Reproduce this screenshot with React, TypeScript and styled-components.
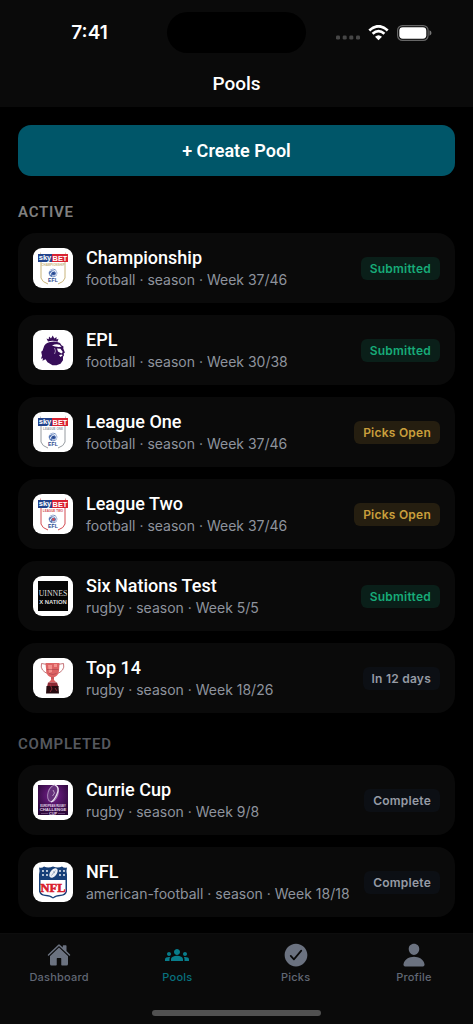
import React from "react";
import styled, { createGlobalStyle } from "styled-components";
import { IoCheckmarkCircle, IoHome, IoPerson } from "react-icons/io5";
import { MdGroups } from "react-icons/md";

const GlobalStyle = createGlobalStyle`
  *, *::before, *::after { box-sizing: border-box; }
  body {
    margin: 0;
    background: #000;
    color: #fff;
    font-family: Inter, "Liberation Sans", sans-serif;
  }
`;

const Screen = styled.div`
  display: flex;
  flex-direction: column;
  min-height: 100vh;
`;

const Header = styled.header`
  padding-top: 12px;
  background: #0a0a0a;
`;

const StatusBar = styled.div`
  display: grid;
  grid-template-columns: 1fr 139px 1fr;
  align-items: center;
`;

const Time = styled.time`
  padding-left: 12px;
  text-align: center;
  font-size: 19px;
  font-weight: 600;
  line-height: 24px;
`;

const Island = styled.div`
  height: 41px;
  border-radius: 21px;
  background: #000;
`;

const Indicators = styled.div`
  display: flex;
  justify-content: center;
  align-items: center;
  gap: 8px;
  padding-right: 12px;
`;

const PageTitle = styled.h1`
  margin: 0;
  padding: 19px 0 11px;
  text-align: center;
  font-family: Roboto, sans-serif;
  font-size: 19px;
  font-weight: 500;
  line-height: 24px;
`;

const Main = styled.main`
  flex: 1;
  padding: 18px 18px 15px;
`;

const CreateButton = styled.button`
  display: block;
  width: 100%;
  margin: 0 0 27px;
  padding: 14px;
  border: 0;
  border-radius: 13px;
  background: #005669;
  color: #fff;
  font-family: Roboto, sans-serif;
  font-size: 18px;
  font-weight: 600;
  line-height: 23px;
  cursor: pointer;
`;

const Section = styled.section`
  & + & { margin-top: 22px; }
`;

const SectionTitle = styled.h2<{ $muted?: boolean }>`
  margin: 0 0 12px;
  color: ${(p) => (p.$muted ? "#55585e" : "#808080")};
  font-family: Roboto, sans-serif;
  font-size: 15px;
  font-weight: 600;
  line-height: 18px;
  letter-spacing: 0.05em;
  text-transform: uppercase;
`;

const PoolList = styled.ul`
  display: flex;
  flex-direction: column;
  gap: 12px;
  margin: 0;
  padding: 0;
  list-style: none;
`;

const PoolCard = styled.a`
  display: flex;
  align-items: center;
  gap: 13px;
  min-height: 70px;
  padding: 12px 15px;
  border-radius: 18px;
  background: #0a0a0a;
  color: inherit;
  text-decoration: none;
`;

const LogoTile = styled.span`
  flex: none;
  display: flex;
  width: 40px;
  height: 40px;
  border-radius: 9px;
  background: #fff;
  overflow: hidden;
`;

const PoolText = styled.span`
  flex: 1;
  min-width: 0;
  display: flex;
  flex-direction: column;
  padding-top: 2px;
`;

const PoolName = styled.span`
  font-family: Roboto, sans-serif;
  font-size: 18px;
  font-weight: 500;
  line-height: 22px;
`;

const PoolMeta = styled.span`
  color: #8e939d;
  font-size: 14px;
  line-height: 22px;
  white-space: nowrap;
`;

type Tone = "submitted" | "open" | "neutral";

const tones: Record<Tone, { bg: string; fg: string }> = {
  submitted: { bg: "#0a1f19", fg: "#17ab78" },
  open: { bg: "#251e10", fg: "#c99f3c" },
  neutral: { bg: "#0c0f14", fg: "#969ba5" },
};

const Badge = styled.span<{ $tone: Tone }>`
  flex: none;
  padding: 4px 9px;
  border-radius: 6px;
  background: ${(p) => tones[p.$tone].bg};
  color: ${(p) => tones[p.$tone].fg};
  font-size: 12px;
  font-weight: 600;
  line-height: 15px;
  letter-spacing: 0.02em;
`;

const TabBar = styled.nav`
  position: sticky;
  bottom: 0;
  display: flex;
  flex-direction: column;
  align-items: center;
  padding: 9px 0 8px;
  border-top: 1px solid #0d0d0d;
  background: #0a0a0a;
`;

const Tabs = styled.div`
  display: flex;
  width: 100%;
`;

const Tab = styled.a<{ $active?: boolean }>`
  flex: 1;
  display: flex;
  flex-direction: column;
  align-items: center;
  gap: 2px;
  color: ${(p) => (p.$active ? "#087d8b" : "#6b7280")};
  text-decoration: none;
`;

const TabIcon = styled.span`
  display: flex;
  align-items: center;
  justify-content: center;
  height: 24px;

  svg { flex: none; }
`;

const TabLabel = styled.span`
  font-size: 11px;
  font-weight: 500;
  line-height: 16px;
  letter-spacing: 0.02em;
  opacity: 0.9;
`;

const HomeIndicator = styled.div`
  width: 169px;
  height: 6px;
  margin-top: 25px;
  border-radius: 3px;
  background: #505050;
`;

function EflLogo({ label, trim }: { label: string; trim: string }) {
  return (
    <svg width="40" height="40" viewBox="0 0 40 40" aria-hidden="true">
      <path d="M8 14V30Q9 34 15 36M32 14V30Q31 34 25 36" fill="none" stroke={trim} strokeWidth="1" />
      <path d="M7.500 4.500V7M32.500 4.500V7" stroke={trim} strokeWidth=".6" />
      <path d="M5 6h14v8H5z" fill="#23438b" />
      <path d="M19 6h16v8H19z" fill="#d92332" />
      <g fontFamily="Liberation Sans, sans-serif" fontWeight="700" textAnchor="middle">
        <text x="12" y="12" fontSize="7.600" fill="#fff">sky</text>
        <text x="27" y="12.700" fontSize="7.400" fill="#fff">BET</text>
        <text x="20" y="17.500" fontSize="3" fill={trim}>{label}</text>
        <text x="20" y="34.300" fontSize="5.200" fill="#29488f">EFL</text>
      </g>
      <circle cx="20" cy="25" r="4.300" fill="#5878b5" />
      <path d="M16 23q5-3 7 1t-4 4M17 27q1-5 7-4" fill="none" stroke="#fff" strokeWidth=".9" />
      <circle cx="20.500" cy="25.400" r="1.300" fill={trim === "#d34a50" ? trim : "#29488f"} />
    </svg>
  );
}

function LionLogo() {
  return (
    <svg width="40" height="40" viewBox="0 0 40 40" aria-hidden="true">
      <g fill="#360d58">
        <path d="M15 11.500l-1.500-3 2.200.8L16 6.500l2 2 1.700-3 1.600 3 2.200-1.500v2.500l2-.7-1 3q-4.500-1.800-9.500-.3z" />
        <path d="M11 16.500q1-3.500 6-4.500 6-1.500 10 1l1.500 2.300 2 1.300-.2 2 1.600 4-1.200 1 .3 2-1 1.200v3.500l-2.500 3.500-4 1.500h-4l-5-3-2-3-3 1.500.5-2.500-2 .5 1-3-.8-4 1.300-1z" />
      </g>
      <path d="M19 15.500q4-2 7.500-.8l2 2-3 .4-3.500-.7zM24 18.600l3.500.2 2.300 3.200-1.300 1.400-3.500-1.800zM26 25l3-.6.5 1.200-2 1.500z" fill="#fff" />
      <path d="M21.500 18l1 3-1 3" fill="none" stroke="#fff" strokeWidth=".5" />
    </svg>
  );
}

function SixNationsLogo() {
  return (
    <svg width="40" height="40" viewBox="0 0 40 40" aria-hidden="true">
      <path d="M5 5h30v30H5z" fill="#050505" />
      <g fill="#ddd" textAnchor="middle">
        <text x="20" y="20.300" fontFamily="Liberation Serif, serif" fontSize="7.800">UINNES</text>
        <text x="20" y="28" fontFamily="Liberation Sans, sans-serif" fontWeight="700" fontSize="5.900">X NATION</text>
      </g>
    </svg>
  );
}

function TrophyLogo() {
  return (
    <svg width="40" height="40" viewBox="0 0 40 40" aria-hidden="true">
      <path d="M14.500 6.500l-6-1q-1 4 1 6.500t6 4M24.500 6.500l6-1q1 4-1 6.500t-6 4" fill="none" stroke="#c0676b" strokeWidth=".9" />
      <path d="M12.500 5h14q-.3 7-.8 9.500-1 3.500-4.700 4.800V22l2.500 2.500h-8L18 22v-2.700q-3.700-1.300-4.700-4.800z" fill="#dc6263" />
      <path d="M15 7h4v7l-3 1zM21 6h3v3h-3z" fill="#f2908b" />
      <path d="M14 11.500h11.500M16 15.500q4 2 7.500 0M18 20h3" stroke="#963943" strokeWidth=".5" fill="none" />
      <path d="M15 24.500h9l1.500 4.500H14z" fill="#8d2934" />
      <path d="M13.500 28h12l.5 7.500H13z" fill="#260b10" />
      <path d="M17 26l2 5-2 3M22 30l2 3" fill="none" stroke="#a33343" strokeWidth=".8" />
    </svg>
  );
}

function ChallengeCupLogo() {
  return (
    <svg width="40" height="40" viewBox="0 0 40 40" aria-hidden="true">
      <defs>
        <radialGradient id="challenge-glow" cx=".5" cy=".35" r=".65">
          <stop offset="0" stopColor="#782091" />
          <stop offset="1" stopColor="#2b0838" />
        </radialGradient>
      </defs>
      <path d="M5 5h30v30H5z" fill="url(#challenge-glow)" />
      <ellipse cx="20" cy="13.500" rx="5" ry="8.500" transform="rotate(18 20 13.500)" fill="#65317a" stroke="#a98ab8" strokeWidth="1" />
      <path d="M22 5q5 2 2 9t-6 8" fill="none" stroke="#eee3f2" strokeWidth="1.300" />
      <path d="M20 10l1.500 3-2 3" fill="none" stroke="#cbb4d4" strokeWidth=".8" />
      <g fontFamily="Liberation Sans, sans-serif" fontWeight="700" textAnchor="middle" fill="#e4d7ea">
        <text x="20" y="27" fontSize="2.700">EUROPEAN RUGBY</text>
        <text x="20" y="31.200" fontSize="4.300">CHALLENGE</text>
        <text x="20" y="34.800" fontSize="3.800">CUP</text>
      </g>
      <path d="M8 33.500h7M25 33.500h7" stroke="#a67db4" strokeWidth=".5" />
    </svg>
  );
}

function NflLogo() {
  return (
    <svg width="40" height="40" viewBox="0 0 40 40" aria-hidden="true">
      <path d="M6 5.500q3 1 5-1 4 2 9 0 5 2 9 0 2 2 5 1-1 3 0 7v17q-1 4-6 4.500-5 0-8 2.500-3-2.500-8-2.500-5-.5-6-4.500v-17q1-4 0-7z" fill="#173f78" />
      <path d="M7.500 18h25v11.500q-1 3-5 3.200-5 0-7.500 2.500-2.500-2.500-7.500-2.500-4-.2-5-3.200z" fill="#fff" />
      <g fill="#fff">
        <circle cx="10" cy="9" r=".9" /><circle cx="14" cy="9" r=".9" />
        <circle cx="10" cy="13" r=".9" /><circle cx="14" cy="13" r=".9" />
        <circle cx="27" cy="9" r=".9" /><circle cx="31" cy="9" r=".9" />
        <circle cx="27" cy="13" r=".9" /><circle cx="31" cy="13" r=".9" />
      </g>
      <ellipse cx="20.500" cy="11" rx="5.500" ry="3.200" transform="rotate(-52 20.500 11)" fill="#edf0f5" />
      <path d="M18.500 13.500l4-5M20 9.500l2 1.500" stroke="#647d9e" strokeWidth=".6" />
      <text x="20" y="30" textAnchor="middle" fontFamily="Liberation Serif, serif" fontWeight="700" fontSize="12.500" fill="#d91e2e" stroke="#d91e2e" strokeWidth=".6">NFL</text>
    </svg>
  );
}

interface Pool {
  name: string;
  meta: string;
  status: string;
  tone: Tone;
  logo: React.ReactNode;
}

const active: Pool[] = [
  { name: "Championship", meta: "football · season · Week 37/46", status: "Submitted", tone: "submitted", logo: <EflLogo label="CHAMPIONSHIP" trim="#c8b37a" /> },
  { name: "EPL", meta: "football · season · Week 30/38", status: "Submitted", tone: "submitted", logo: <LionLogo /> },
  { name: "League One", meta: "football · season · Week 37/46", status: "Picks Open", tone: "open", logo: <EflLogo label="LEAGUE ONE" trim="#969ba0" /> },
  { name: "League Two", meta: "football · season · Week 37/46", status: "Picks Open", tone: "open", logo: <EflLogo label="LEAGUE TWO" trim="#d34a50" /> },
  { name: "Six Nations Test", meta: "rugby · season · Week 5/5", status: "Submitted", tone: "submitted", logo: <SixNationsLogo /> },
  { name: "Top 14", meta: "rugby · season · Week 18/26", status: "In 12 days", tone: "neutral", logo: <TrophyLogo /> },
];

const completed: Pool[] = [
  { name: "Currie Cup", meta: "rugby · season · Week 9/8", status: "Complete", tone: "neutral", logo: <ChallengeCupLogo /> },
  { name: "NFL", meta: "american-football · season · Week 18/18", status: "Complete", tone: "neutral", logo: <NflLogo /> },
];

function Pools({ pools }: { pools: Pool[] }) {
  return (
    <PoolList>
      {pools.map((pool) => (
        <li key={pool.name}>
          <PoolCard href="#">
            <LogoTile>{pool.logo}</LogoTile>
            <PoolText>
              <PoolName>{pool.name}</PoolName>
              <PoolMeta>{pool.meta}</PoolMeta>
            </PoolText>
            <Badge $tone={pool.tone}>{pool.status}</Badge>
          </PoolCard>
        </li>
      ))}
    </PoolList>
  );
}

export default function App() {
  return (
    <>
      <GlobalStyle />
      <Screen>
        <Header>
          <StatusBar>
            <Time>7:41</Time>
            <Island />
            <Indicators>
              <svg width="24" height="16" viewBox="0 0 24 16" aria-hidden="true">
                <g fill="#464646">
                  <rect x="0" y="10.500" width="4" height="4" rx="1.300" />
                  <rect x="6.700" y="10.500" width="4" height="4" rx="1.300" />
                  <rect x="13.300" y="10.500" width="4" height="4" rx="1.300" />
                  <rect x="20" y="10.500" width="4" height="4" rx="1.300" />
                </g>
              </svg>
              <svg width="21" height="16" viewBox="0 0 21 16" aria-hidden="true">
                <path d="M1.300 5.400Q10.500-2.900 19.700 5.400M4.600 8.800q5.900-5.300 11.800 0" fill="none" stroke="#fff" strokeWidth="2.700" />
                <path d="M7 11.800q3.500-3 7 0L10.500 15.300z" fill="#fff" />
              </svg>
              <svg width="35" height="16" viewBox="0 0 35 16" aria-hidden="true">
                <rect x=".6" y=".6" width="30.500" height="14.800" rx="4.800" fill="none" stroke="#666" strokeWidth="1.200" />
                <rect x="2.300" y="2.300" width="27" height="11.400" rx="3.400" fill="#fff" />
                <path d="M32.500 5.300q2 .8 2 2.700t-2 2.700z" fill="#777" />
              </svg>
            </Indicators>
          </StatusBar>
          <PageTitle>Pools</PageTitle>
        </Header>
        <Main>
          <CreateButton type="button">+ Create Pool</CreateButton>
          <Section>
            <SectionTitle>Active</SectionTitle>
            <Pools pools={active} />
          </Section>
          <Section>
            <SectionTitle $muted>Completed</SectionTitle>
            <Pools pools={completed} />
          </Section>
        </Main>
        <TabBar>
          <Tabs>
            <Tab href="#"><TabIcon><IoHome size={24} /></TabIcon><TabLabel>Dashboard</TabLabel></Tab>
            <Tab href="#" $active aria-current="page"><TabIcon><MdGroups size={24} /></TabIcon><TabLabel>Pools</TabLabel></Tab>
            <Tab href="#"><TabIcon><IoCheckmarkCircle size={28} /></TabIcon><TabLabel>Picks</TabLabel></Tab>
            <Tab href="#"><TabIcon><IoPerson size={26} /></TabIcon><TabLabel>Profile</TabLabel></Tab>
          </Tabs>
          <HomeIndicator />
        </TabBar>
      </Screen>
    </>
  );
}
